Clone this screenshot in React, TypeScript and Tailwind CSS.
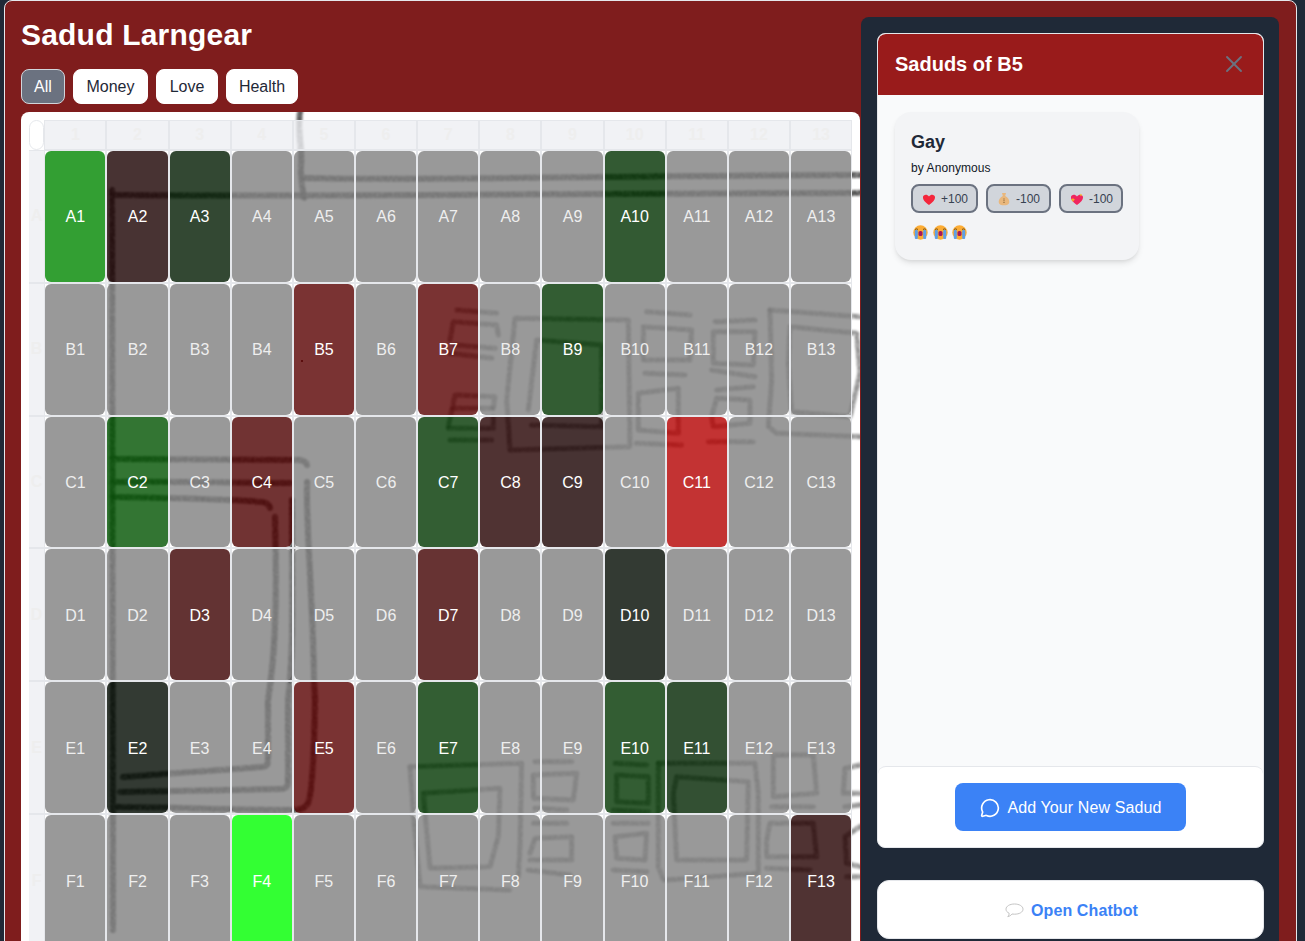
import React from "react";
import { MessageCircle, X } from "lucide-react";

const font = { fontFamily: '"Liberation Sans", Arial, sans-serif' };

const ROWS = ["A", "B", "C", "D", "E", "F"];
const COLS = [1, 2, 3, 4, 5, 6, 7, 8, 9, 10, 11, 12, 13];

// anything not listed here is the plain grey cell
const cellColors: Record<string, string> = {
  A1: "bg-[#008700cc]",
  A2: "bg-[#1a0000cc]",
  A3: "bg-[#001a00cc]",
  A10: "bg-[#003100cc]",
  B5: "bg-[#590000cc]",
  B7: "bg-[#590000cc]",
  B9: "bg-[#003400cc]",
  C2: "bg-[#005200cc]",
  C4: "bg-[#4e0000cc]",
  C7: "bg-[#003600cc]",
  C8: "bg-[#240000cc]",
  C9: "bg-[#190000cc]",
  C11: "bg-[#b40000cc]",
  D3: "bg-[#3c0000cc]",
  D7: "bg-[#410000cc]",
  D10: "bg-[#000900cc]",
  E2: "bg-[#000900cc]",
  E5: "bg-[#590000cc]",
  E7: "bg-[#003600cc]",
  E10: "bg-[#003400cc]",
  E11: "bg-[#002400cc]",
  F4: "bg-[#00ff00cc]",
  F13: "bg-[#240000cc]",
};

// pencil floor plan, page coordinates
const planLines = [
  "M300 112 C297 135 303 150 301 165 C300 180 303 190 304 198",
  "M303 178 C420 181 560 176 860 175",
  "M112 195 C300 197 600 193 860 193",
  "M112 190 C110 300 113 600 113 930",
  "M112 459 C180 459 260 460 300 460 Q306 461 307 465",
  "M112 482 C170 481 230 483 290 483",
  "M112 497 C170 498 230 499 262 502 Q269 503 270 508",
  "M275 517 C277 600 276 650 268 700 L268 762 Q268 766 262 767 L123 777",
  "M292 500 C292 600 294 650 288 700 L288 784 Q287 789 280 789 L120 792",
  "M307 482 C306 530 313 600 314 680 L315 700 C314 760 312 795 308 803 Q305 810 293 810 C230 810 170 807 117 807",
];

// traced from the right half, offsets as used in the two groups below
const upperGlyphs = [
  "M320 360 L345 115 L685 120 L690 500 L330 510 Z",
  "M385 390 L410 180 L605 195 L605 440 L395 435",
  "M170 90 L290 100",
  "M150 180 L160 125 L290 135 L295 165",
  "M165 195 L285 205",
  "M150 220 L275 235",
  "M145 440 L165 345 L285 350 L280 385",
  "M160 385 L275 385",
  "M145 445 L280 445 L280 410",
  "M150 480 L275 480",
  "M740 95 L870 105",
  "M730 140 L875 150 L870 240 L730 240 Z",
  "M735 280 L855 285",
  "M715 340 L835 325 L835 460 L715 450 Z",
  "M710 490 L845 495",
  "M945 125 L1065 120",
  "M940 155 L1065 155 L1060 255 L940 250 Z",
  "M935 270 L1065 290",
  "M950 330 L1060 320",
  "M935 410 L950 355 L1050 360 L1050 430 L940 440 Z",
  "M925 485 L1060 485",
  "M1110 90 L1380 110",
  "M1110 90 L1115 300 L1105 440 L1130 460 L1380 470",
  "M1170 140 L1370 160 L1380 280 L1350 410 L1175 395 L1165 250 Z",
];

const lowerGlyphs = [
  "M30 320 L365 310 L360 560 L355 650",
  "M30 320 L40 460 L60 680 L330 690",
  "M70 400 L300 385 L295 530 L270 620 L90 625 Z",
  "M405 305 L515 305",
  "M400 345 L530 340 L520 420 L400 415 Z",
  "M405 445 L500 450",
  "M400 490 L500 490",
  "M390 580 L405 535 L515 530 L515 600 L390 600",
  "M385 630 L510 645",
  "M645 310 L740 315",
  "M650 345 L745 350 L745 430 L650 425 Z",
  "M640 450 L745 455",
  "M640 490 L745 490",
  "M645 530 L740 520 L735 600 L650 595 Z",
  "M640 630 L740 635",
  "M775 310 L1065 310 L1075 400 L1075 640 L800 660",
  "M775 310 L775 620 L790 660",
  "M830 350 L1045 365 L1040 600 L830 600 L820 400 Z",
  "M1120 285 L1240 285 L1250 400 L1120 410 Z",
  "M1115 440 L1240 440",
  "M1100 540 L1110 490 L1240 490 L1250 590 L1100 590 Z",
  "M1100 625 L1230 630",
  "M1380 315 L1335 325 L1330 400 L1380 400",
  "M1380 435 L1335 440",
  "M1380 500 L1335 530 L1340 610 L1380 620",
  "M1340 650 L1380 650",
];

const Pencil = ({ lines, width, opacity }: { lines: string[]; width: number; opacity: number }) => (
  <g fill="none" stroke="#222" strokeOpacity={opacity} strokeWidth={width} strokeLinejoin="round" strokeLinecap="round">
    {lines.map((d, i) => (
      <path key={i} d={d} />
    ))}
  </g>
);

const FloorPlan = () => (
  <svg className="absolute left-0 top-0" width="839" height="900" viewBox="21 112 839 900">
    <defs>
      <filter
        id="pencil"
        x="0"
        y="0"
        width="1000"
        height="1100"
        filterUnits="userSpaceOnUse"
        colorInterpolationFilters="sRGB"
      >
        <feTurbulence type="fractalNoise" baseFrequency="0.7" numOctaves="2" seed="9" result="grain" />
        <feColorMatrix
          in="grain"
          type="matrix"
          values="0 0 0 0 0  0 0 0 0 0  0 0 0 0 0  0 0 0 -2.5 2.1"
          result="mask"
        />
        <feComposite in="SourceGraphic" in2="mask" operator="in" result="grainy" />
        <feGaussianBlur in="grainy" stdDeviation="0.85" />
      </filter>
    </defs>
    <g filter="url(#pencil)">
      <Pencil lines={planLines} width={6} opacity={0.85} />
      <g transform="translate(400 280) scale(0.3333)">
        <Pencil lines={upperGlyphs} width={15} opacity={0.55} />
      </g>
      <g transform="translate(400 660) scale(0.3333)">
        <Pencil lines={lowerGlyphs} width={15} opacity={0.55} />
      </g>
    </g>
    <circle cx="302" cy="361" r="1" fill="#300" />
  </svg>
);

const HeartIcon = () => (
  <svg width="16" height="16" viewBox="0 0 16 16">
    <path d="M8 14 C3 10.5 1.8 8 2 6 C2.2 3.5 6 2.6 8 5.4 C10 2.6 13.8 3.5 14 6 C14.2 8 13 10.5 8 14Z" fill="#f4263c" />
  </svg>
);

const BagIcon = () => (
  <svg width="16" height="16" viewBox="0 0 16 16">
    <path d="M6 2 L10 2 L9.2 5 C12 6.5 13.5 9 13.3 11 C13 13.8 10.5 14.3 8 14.3 C5.5 14.3 3 13.8 2.7 11 C2.5 9 4 6.5 6.8 5Z" fill="#e9b77c" />
    <path d="M8 7.5 V12.5" stroke="#8d6a3c" strokeWidth="1.2" strokeDasharray="1 0.7" />
  </svg>
);

const SparkleHeartIcon = () => (
  <svg width="16" height="16" viewBox="0 0 16 16">
    <path d="M8 14 C3 10.5 1.8 8 2 6 C2.2 3.5 6 2.6 8 5.4 C10 2.6 13.8 3.5 14 6 C14.2 8 13 10.5 8 14Z" fill="#f0255f" />
    <path d="M4 6.5 L4.6 8.2 L6.2 8.8 L4.6 9.4 L4 11 L3.4 9.4 L1.8 8.8 L3.4 8.2Z" fill="#fcc21b" />
    <path d="M12 2.6 L12.4 3.6 L13.4 4 L12.4 4.4 L12 5.4 L11.6 4.4 L10.6 4 L11.6 3.6Z" fill="#fcc21b" />
  </svg>
);

const CryingFace = () => (
  <svg width="15" height="15" viewBox="0 0 15 15">
    <circle cx="7.5" cy="7.5" r="7.2" fill="#fcac34" />
    <rect x="1.8" y="5" width="3" height="9" rx="1" fill="#5d9fe6" />
    <rect x="10.2" y="5" width="3" height="9" rx="1" fill="#5d9fe6" />
    <path d="M2 4.5 Q3.5 3.2 5 4.5 M10 4.5 Q11.5 3.2 13 4.5" stroke="#66471b" strokeWidth="0.9" fill="none" />
    <rect x="5.5" y="6" width="4" height="5" rx="1.6" fill="#a3195b" />
  </svg>
);

const BalloonIcon = () => (
  <svg width="19" height="15" viewBox="0 0 19 15">
    <path
      d="M9.5 1 C14.3 1 18 3.2 18 6.2 C18 9.2 14.3 11.2 9.5 11.2 C8.6 11.2 7.8 11.1 7 11 C6 12.4 4.6 13.2 2.8 13.6 C3.8 12.5 4.2 11.4 4.1 10.2 C2.1 9.3 1 7.9 1 6.2 C1 3.2 4.7 1 9.5 1Z"
      fill="#fff"
      stroke="#c4c4c4"
      strokeWidth="1"
    />
  </svg>
);

const Reaction = ({ icon, label, width }: { icon: React.ReactNode; label: string; width: string }) => (
  <div className={`flex h-[29px] items-center gap-1 rounded-lg border-2 border-[#6b7280] bg-[#d1d5db] px-2 text-xs text-[#374151] ${width}`}>
    {icon}
    <span>{label}</span>
  </div>
);

const SeatGrid = () => (
  <div className="relative h-[900px] overflow-hidden rounded-t-lg bg-white">
    <FloorPlan />
    <div className="relative grid grid-cols-[15.3px_repeat(13,62.15px)] grid-rows-[30px_repeat(6,132.83px)] pl-2 pt-2">
      <div className="rounded-xl border border-[#e5e7eb] bg-white" />
      {COLS.map((col) => (
        <div
          key={col}
          className="flex items-center justify-center border border-[#e5e7eb] bg-[#eeeff2cc] text-base font-bold text-[#eeeeee]"
        >
          {col}
        </div>
      ))}
      {ROWS.map((row) => (
        <React.Fragment key={row}>
          <div className="flex items-center justify-center border-y border-[#e5e7eb] bg-[#eeeff2cc] text-base font-bold text-[#eeeeee]">
            {row}
          </div>
          {COLS.map((col) => {
            const id = `${row}${col}`;
            const color = cellColors[id];
            return (
              <div key={id} className="border border-[#e5e7eb]">
                <div
                  className={`flex h-full items-center justify-center rounded-md pt-0.5 text-base ${
                    color ? `${color} text-white` : "bg-[#808080cc] text-[#eeeeee]"
                  }`}
                >
                  {id}
                </div>
              </div>
            );
          })}
        </React.Fragment>
      ))}
    </div>
  </div>
);

export default function App() {
  const filters = [
    { label: "All", width: "w-11" },
    { label: "Money", width: "w-[75px]" },
    { label: "Love", width: "w-[62px]" },
    { label: "Health", width: "w-[72px]" },
  ];

  return (
    <div className="h-screen overflow-hidden bg-[#1f2937] pl-1 pr-2" style={font}>
      <div className="flex h-[1100px] gap-px rounded-lg border border-[#e5e7eb] bg-[#7f1d1d] pl-4 pr-[17px] pt-4">
        {/* LEFT: GRID */}
        <div className="w-[839px] shrink-0">
          <h1 className="mb-4 text-3xl font-bold tracking-[0.2px] text-white">Sadud Larngear</h1>
          <div className="mb-2 flex gap-2">
            {filters.map((f, i) => (
              <button
                key={f.label}
                className={`h-[35px] rounded-lg border text-base ${f.width} ${
                  i === 0 ? "border-[#d1d5db] bg-[#6b7280] text-white" : "border-white bg-white text-[#1f2937]"
                }`}
              >
                {f.label}
              </button>
            ))}
          </div>
          <SeatGrid />
        </div>

        {/* RIGHT: SIDEBAR */}
        <div className="h-[1000px] w-[418px] shrink-0 rounded-lg bg-[#1f2937] py-4 pl-4 pr-[15px]">
          <div className="flex h-[815px] flex-col overflow-hidden rounded-lg border border-[#e5e7eb] bg-[#f9fafb]">
            <div className="flex h-[61px] items-center justify-between rounded-t-lg bg-[#991b1b] pb-0.5 pl-[17px] pr-[15px]">
              <h2 className="text-xl font-bold text-white">Saduds of B5</h2>
              <X size={28} strokeWidth={1.6} className="text-[#6b7280]" />
            </div>
            <div className="flex-1 px-[17px] py-[17px]">
              <div className="h-[148px] w-[244px] rounded-2xl bg-[#f3f4f6] p-4 shadow-md">
                <h3 className="text-lg font-bold leading-[28px] text-[#1f2937]">Gay</h3>
                <p className="mb-2 mt-1 text-xs leading-4 tracking-[0.08px] text-[#111827]">by Anonymous</p>
                <div className="flex gap-2">
                  <Reaction icon={<HeartIcon />} label="+100" width="w-[67px]" />
                  <Reaction icon={<BagIcon />} label="-100" width="w-[65px]" />
                  <Reaction icon={<SparkleHeartIcon />} label="-100" width="w-16" />
                </div>
                <div className="mt-3 flex gap-[4.5px] pl-[2px]">
                  <CryingFace />
                  <CryingFace />
                  <CryingFace />
                </div>
              </div>
            </div>
            <div className="flex h-[81px] items-start justify-center rounded-lg border-t border-[#e5e7eb] bg-white pt-4">
              <button className="flex h-12 w-[231px] items-center justify-center gap-2 rounded-lg bg-[#3b82f6] pt-px text-base tracking-[0.1px] text-white">
                <MessageCircle size={20} />
                Add Your New Sadud
              </button>
            </div>
          </div>
          <div className="mt-8 flex h-[59px] items-center justify-center gap-[7px] rounded-xl border border-[#e5e7eb] bg-white pl-0.5 pt-0.5 text-base font-bold tracking-[0.1px] text-[#3b82f6]">
            <BalloonIcon />
            Open Chatbot
          </div>
        </div>
      </div>
    </div>
  );
}
